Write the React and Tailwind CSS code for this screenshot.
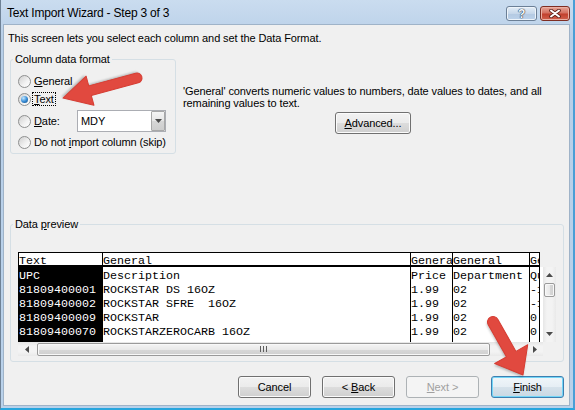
import React from "react";

const previewCols = [
  { head: "Text", w: "w-[84px]", dark: true, rows: ["UPC", "81809400001", "81809400002", "81809400009", "81809400070"] },
  { head: "General", w: "w-[308px]", rows: ["Description", "ROCKSTAR DS 16OZ", "ROCKSTAR SFRE  16OZ", "ROCKSTAR", "ROCKSTARZEROCARB 16OZ"] },
  { head: "General", w: "w-[42px]", rows: ["Price", "1.99", "1.99", "1.99", "1.99"] },
  { head: "General", w: "w-[77px]", rows: ["Department", "02", "02", "02", "02"] },
  { head: "General", w: "w-[10px]", rows: ["Qu", "-1", "-1", "0", "0"] },
];

const Radio = ({ checked }) => (
  <span className="w-[13px] h-[13px] shrink-0 rounded-full border border-[#8e8f8f] bg-[linear-gradient(135deg,#cfcfcf,#f2f2f2_60%,#ffffff)] flex items-center justify-center">
    {checked && (
      <span className="w-[7px] h-[7px] rounded-full bg-[radial-gradient(circle_at_35%_30%,#c4e8ff,#3b8fd8_50%,#0c477f)]" />
    )}
  </span>
);

const Btn = ({ children, kind = "normal", className = "" }) => {
  const look = {
    normal: "border-[#707070] bg-[linear-gradient(#f2f2f2_0%,#ebebeb_49%,#dddddd_50%,#cfcfcf_100%)] shadow-[inset_0_0_0_1px_#fbfbfb]",
    primary: "border-[#3c7fb1] bg-[linear-gradient(#f0f6fa_0%,#e6eef4_49%,#d6e2eb_50%,#c9d8e3_100%)] shadow-[inset_0_0_0_1px_#74d6f7]",
    disabled: "border-[#adb2b5] bg-[#f4f4f4] text-[#a0a0a0]",
  }[kind];
  return (
    <div className={`h-[22px] rounded-[3px] border flex items-center justify-center leading-[14px] ${look} ${className}`}>
      {children}
    </div>
  );
};

const Tri = ({ dir }) => {
  const pts = {
    up: "0,4 3.5,0 7,4",
    down: "0,0 7,0 3.5,4",
    left: "4,0 4,7 0,3.5",
    right: "0,0 0,7 4,3.5",
  }[dir];
  const vertical = dir === "up" || dir === "down";
  return (
    <svg width={vertical ? 7 : 4} height={vertical ? 4 : 7}>
      <polygon points={pts} fill="#4a4a4a" />
    </svg>
  );
};

const Arrow = ({ x1, y1, x2, y2, s, h, w }) => {
  const L = Math.hypot(x2 - x1, y2 - y1);
  const deg = (Math.atan2(y2 - y1, x2 - x1) * 180) / Math.PI;
  const d = `M0 ${-s} L${L - h} ${-s} L${L - h} ${-w} L${L} 0 L${L - h} ${w} L${L - h} ${s} L0 ${s} A${s} ${s} 0 0 1 0 ${-s} Z`;
  return (
    <g transform={`translate(${x1} ${y1}) rotate(${deg})`}>
      <path d={d} fill="rgba(0,0,0,0.25)" transform="translate(1.5 1.5)" filter="url(#blur)" />
      <path d={d} fill="#e1493f" stroke="#d63d33" strokeWidth="1" strokeLinejoin="round" />
    </g>
  );
};

export default function App() {
  return (
    <div className="w-[575px] h-[410px] relative overflow-hidden flex flex-col bg-[linear-gradient(#cadcef,#b8cfe8_40px,#b9d1ea)] border-l border-l-[#6f8296] border-r-2 border-r-[#4a9ed6] border-b-2 border-b-[#27a6de] pl-[2px] pr-[3px] pb-[2px] font-['Liberation_Sans',Arial,sans-serif] text-[11px] tracking-[-0.1px] text-black">
      {/* title bar */}
      <div className="h-[24px] shrink-0 flex items-start justify-between pl-[4px]">
        <div className="mt-[6px] leading-[14px] text-[12px] tracking-[-0.2px]">Text Import Wizard - Step 3 of 3</div>
        <div className="mt-[6px] flex gap-[3px]">
          <div className="w-[31px] h-[15px] rounded-[3px] border border-[#6b7f96] bg-[linear-gradient(#e3edf7,#c6d7ea_50%,#b3c9e2_51%,#bcd2ea)] shadow-[inset_0_0_0_1px_#eef4fa] flex items-center justify-center">
            <span className="text-[12px] font-bold leading-[12px] text-[#f4f7fb] [text-shadow:0_0_1px_#2c3d52,0_0_1px_#2c3d52,0_0_1px_#2c3d52]">?</span>
          </div>
          <div className="w-[30px] h-[15px] rounded-[3px] border border-[#7e2d22] bg-[linear-gradient(#e8a597,#d47060_45%,#c2402e_55%,#d0614d)] shadow-[inset_0_0_0_1px_#eab0a4] flex items-center justify-center">
            <svg width="12" height="9" viewBox="0 0 12 9">
              <path d="M2 1.5 L10 7.5 M10 1.5 L2 7.5" stroke="#5a2018" strokeWidth="3.6" strokeLinecap="round" />
              <path d="M2 1.5 L10 7.5 M10 1.5 L2 7.5" stroke="#ffffff" strokeWidth="2" strokeLinecap="round" />
            </svg>
          </div>
        </div>
      </div>

      {/* client area */}
      <div className="flex-1 flex flex-col bg-[#f0f0f0] border border-[#9fb3c8]">
        <div className="pl-[4px] pt-[6px] leading-[14px]">
          This screen lets you select each column and set the Data Format.
        </div>

        <div className="mt-[7px] ml-[6px] flex items-start">
          <fieldset className="w-[166px] shrink-0 border border-[#d5dfe5] rounded-[3px] pl-[2px]">
            <legend className="px-[2px] leading-[14px]">Column data format</legend>
            <div className="pl-[5px] pt-[6px] pb-[2px] flex flex-col">
              <div className="h-[18px] flex items-center gap-[3px]">
                <Radio />
                <span className="leading-[18px]"><u>G</u>eneral</span>
              </div>
              <div className="h-[18px] flex items-center gap-[1px]">
                <Radio checked />
                <span className="h-[14px] leading-[12px] px-[1px] border border-dotted border-black"><u>T</u>ext</span>
              </div>
              <div className="mt-[2px] h-[22px] flex items-center gap-[3px]">
                <Radio />
                <span className="w-[40px] leading-[18px]"><u>D</u>ate:</span>
                <div className="w-[89px] h-[22px] border border-[#abadb3] bg-white flex items-stretch">
                  <span className="flex-1 pl-[3px] leading-[20px]">MDY</span>
                  <div className="w-[14px] border border-[#a8a8a8] rounded-[1px] bg-[linear-gradient(#f4f4f4,#e6e6e6_50%,#d6d6d6_51%,#cdcdcd)] flex items-center justify-center">
                    <Tri dir="down" />
                  </div>
                </div>
              </div>
              <div className="mt-[1px] h-[18px] flex items-center gap-[3px]">
                <Radio />
                <span className="leading-[18px] whitespace-nowrap">Do not <u>i</u>mport column (skip)</span>
              </div>
            </div>
          </fieldset>

          <div className="ml-[7px] w-[380px] flex flex-col">
            <p className="mt-[33px] leading-[12px] whitespace-nowrap">
              'General' converts numeric values to numbers, date values to dates, and all
              <br />
              remaining values to text.
            </p>
            <Btn className="mt-[3px] w-[76px] h-[21px] self-center">
              <u>A</u>dvanced...
            </Btn>
          </div>
        </div>

        <fieldset className="mt-[63px] ml-[6px] w-[554px] border border-[#d5dfe5] rounded-[3px] pl-[2px] pb-[5px]">
          <legend className="px-[2px] leading-[14px]">Data <u>p</u>review</legend>
          <div className="pl-[5px] pt-[21px] flex flex-col">
            <div className="flex">
              <div className="flex border-t border-l border-black font-['Liberation_Mono',monospace] text-[11.67px] tracking-normal">
                {previewCols.map((c, i) => (
                  <div key={i} className={`${c.w} shrink-0 flex flex-col border-r border-black overflow-hidden`}>
                    <div className="h-[14px] border-b-2 border-black bg-white leading-[16px] whitespace-pre">{c.head}</div>
                    <div className={`h-[75px] pt-[2px] ${c.dark ? "bg-black text-white" : "bg-white"}`}>
                      {c.rows.map((r, j) => (
                        <div key={j} className="h-[14px] leading-[14px] whitespace-pre">{r}</div>
                      ))}
                    </div>
                  </div>
                ))}
              </div>
              <div className="w-[3px] flex flex-col">
                <div className="h-[15px]" />
                <div className="h-[75px] bg-white" />
              </div>
              <div className="w-[13px] flex flex-col">
                <div className="h-[15px]" />
                <div className="h-[75px] flex flex-col bg-[linear-gradient(90deg,#e6e6e6,#f3f3f3_30%,#f3f3f3_70%,#e9e9e9)]">
                  <div className="h-[16px] flex items-center justify-center"><Tri dir="up" /></div>
                  <div className="h-[14px] mx-[1px] rounded-[2px] border border-[#9a9a9a] bg-[linear-gradient(90deg,#f4f4f4,#e9e9e9_50%,#d8d8d8_51%,#d0d0d0)] shadow-[inset_0_0_0_1px_#f8f8f8]" />
                  <div className="flex-1" />
                  <div className="h-[16px] flex items-center justify-center"><Tri dir="down" /></div>
                </div>
              </div>
            </div>
            <div className="flex">
              <div className="w-[525px] h-[14px] flex items-center bg-[linear-gradient(#e6e6e6,#f3f3f3_30%,#f3f3f3_70%,#e9e9e9)]">
                <div className="w-[17px] flex items-center justify-center"><Tri dir="left" /></div>
                <div className="ml-[2px] w-[453px] h-[13px] rounded-[2px] border border-[#9a9a9a] bg-[linear-gradient(#f4f4f4,#e9e9e9_50%,#d8d8d8_51%,#d0d0d0)] shadow-[inset_0_0_0_1px_#f8f8f8] flex items-center justify-center gap-[2px]">
                  <span className="w-[1px] h-[6px] bg-[#5e5e5e]" />
                  <span className="w-[1px] h-[6px] bg-[#5e5e5e]" />
                  <span className="w-[1px] h-[6px] bg-[#5e5e5e]" />
                </div>
                <div className="flex-1" />
                <div className="w-[17px] flex items-center justify-center"><Tri dir="right" /></div>
              </div>
              <div className="w-[13px] h-[14px] bg-[#f0f0f0]" />
            </div>
          </div>
        </fieldset>

        <div className="mt-[14px] flex justify-end pr-[5px]">
          <Btn className="w-[73px]">Cancel</Btn>
          <Btn className="w-[73px] ml-[11px]">&lt;&nbsp;<u>B</u>ack</Btn>
          <Btn kind="disabled" className="w-[73px] ml-[11px]"><u>N</u>ext&nbsp;&gt;</Btn>
          <Btn kind="primary" className="w-[73px] ml-[12px]"><u>F</u>inish</Btn>
        </div>
      </div>

      {/* callout arrows */}
      <svg className="absolute inset-0 pointer-events-none" width="575" height="410">
        <defs>
          <filter id="blur" x="-20%" y="-20%" width="140%" height="140%">
            <feGaussianBlur stdDeviation="1" />
          </filter>
        </defs>
        <Arrow x1={136} y1={78} x2={62} y2={98} s={5} h={28} w={15} />
        <Arrow x1={492} y1={322} x2={522} y2={375} s={5.5} h={24} w={19} />
      </svg>
    </div>
  );
}
